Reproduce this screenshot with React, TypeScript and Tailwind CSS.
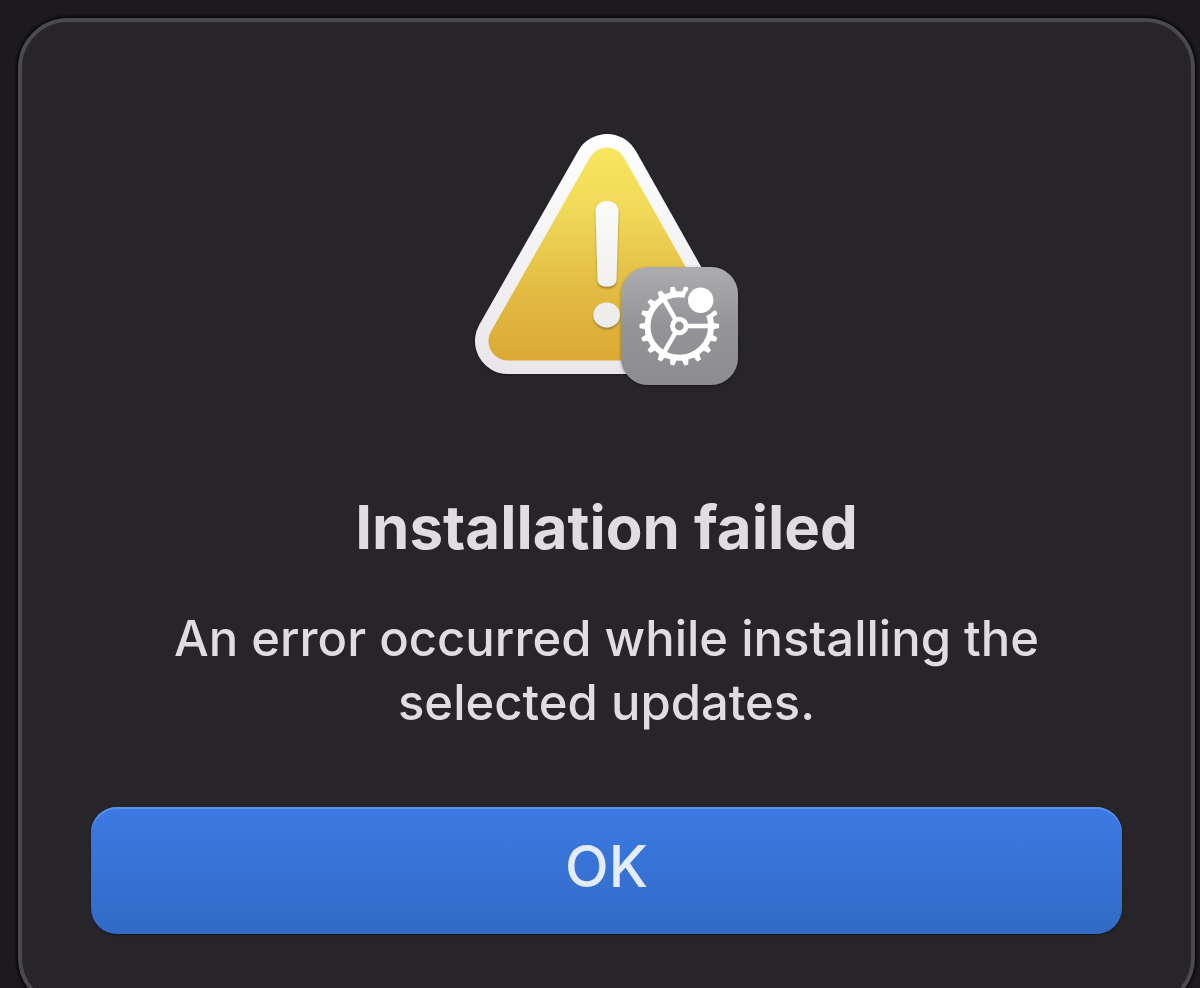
import React from 'react';

const TEETH = Array.from({ length: 18 }, (_, i) => i * 20);
const SPOKES = [0, 120, 240];

const GearBadge: React.FC = () => (
  <g>
    <rect x="146" y="134" width="117" height="118" rx="27" fill="url(#badge)" filter="url(#soft)" />
    <mask id="gearCut" maskUnits="userSpaceOnUse" x="146" y="134" width="118" height="118">
      <rect x="146" y="134" width="118" height="118" fill="#fff" />
      <circle cx="225.7" cy="167.3" r="16.5" fill="#000" />
    </mask>
    <g mask="url(#gearCut)">
      <g transform="translate(204.3 193)" stroke="#fff" fill="none">
        <circle r="31.8" strokeWidth="6" />
        <circle r="6.8" strokeWidth="4.8" />
        {TEETH.map((angle) => (
          <path key={angle} d="M33 -3.6 L39.8 -2 V2 L33 3.6 Z" fill="#fff" stroke="none" transform={`rotate(${angle})`} />
        ))}
        {SPOKES.map((angle) => (
          <path key={angle} d="M8 0 H31" strokeWidth="4.6" transform={`rotate(${angle})`} />
        ))}
      </g>
    </g>
    <circle cx="225.7" cy="167.3" r="12.7" fill="#fff" />
  </g>
);

const WarningIcon: React.FC = () => (
  <svg width="264" height="252" viewBox="0 0 264 252" className="overflow-visible" aria-hidden="true">
    <defs>
      <linearGradient id="rim" gradientUnits="userSpaceOnUse" x1="0" y1="0" x2="0" y2="241">
        <stop offset="0" stopColor="#ffffff" />
        <stop offset="1" stopColor="#e9e6e9" />
      </linearGradient>
      <linearGradient id="yellow" gradientUnits="userSpaceOnUse" x1="0" y1="14" x2="0" y2="227">
        <stop offset="0" stopColor="#f9e65f" />
        <stop offset="0.3" stopColor="#f0d958" />
        <stop offset="0.65" stopColor="#e3bd43" />
        <stop offset="1" stopColor="#dba934" />
      </linearGradient>
      <linearGradient id="mark" gradientUnits="userSpaceOnUse" x1="0" y1="68" x2="0" y2="196">
        <stop offset="0" stopColor="#fbfbfb" />
        <stop offset="1" stopColor="#ecebe9" />
      </linearGradient>
      <linearGradient id="badge" x1="0" y1="0" x2="0" y2="1">
        <stop offset="0" stopColor="#adadb0" />
        <stop offset="0.5" stopColor="#949498" />
        <stop offset="1" stopColor="#8d8d91" />
      </linearGradient>
      <filter id="soft" x="-20%" y="-20%" width="140%" height="140%">
        <feDropShadow dx="0" dy="1" stdDeviation="1.5" floodColor="#000" floodOpacity="0.35" />
      </filter>
      <filter id="markShadow" x="-40%" y="-20%" width="180%" height="150%">
        <feDropShadow dx="0" dy="2" stdDeviation="1.2" floodColor="#8a7430" floodOpacity="0.8" />
      </filter>
    </defs>
    <g filter="url(#soft)">
      <path d="M132 34 L33 208 H230 Z" fill="url(#rim)" stroke="url(#rim)" strokeWidth="66" strokeLinejoin="round" />
    </g>
    <path d="M132 34 L33 208 H230 Z" fill="url(#yellow)" stroke="url(#yellow)" strokeWidth="39" strokeLinejoin="round" />
    <g fill="url(#mark)" filter="url(#markShadow)">
      <path d="M120.5 79 C120.5 72 125 68 132 68 C139 68 143.5 72 143.5 79 L141.5 146 C141.5 151 138 153.5 132 153.5 C126 153.5 122.5 151 122.5 146 Z" />
      <ellipse cx="131.7" cy="182" rx="13.4" ry="12.4" />
    </g>
    <GearBadge />
  </svg>
);

export default function App() {
  return (
    <main className="h-screen overflow-hidden bg-[#1c1a1e] pt-[18px] pr-[5px] pl-[18px] font-['Inter',sans-serif]">
      <section
        role="alertdialog"
        aria-labelledby="alert-title"
        aria-describedby="alert-message"
        className="flex flex-col items-center rounded-[50px] border-4 border-[#4b494e] bg-[#27242a] px-[69px] pt-[111px] pb-[70px] text-center text-[#dfdde1] shadow-[0_0_3px_2px_#09080b]"
      >
        <WarningIcon />
        <h1 id="alert-title" className="mt-[106px] text-[60px] leading-[72px] font-bold">
          Installation failed
        </h1>
        <p id="alert-message" className="mt-11 px-16 text-[49px] leading-[64px] font-medium">
          An error occurred while installing the selected updates.
        </p>
        <button
          type="button"
          className="mt-[72px] flex h-[127px] w-full items-center justify-center rounded-[26px] bg-linear-to-b from-[#3c7ae3] to-[#326bc5] pb-2 text-[57px] leading-[72px] font-medium text-[#e4ecfb] shadow-[inset_0_2px_0_#5b90e8,0_1px_2px_#17151a]"
        >
          OK
        </button>
      </section>
    </main>
  );
}
